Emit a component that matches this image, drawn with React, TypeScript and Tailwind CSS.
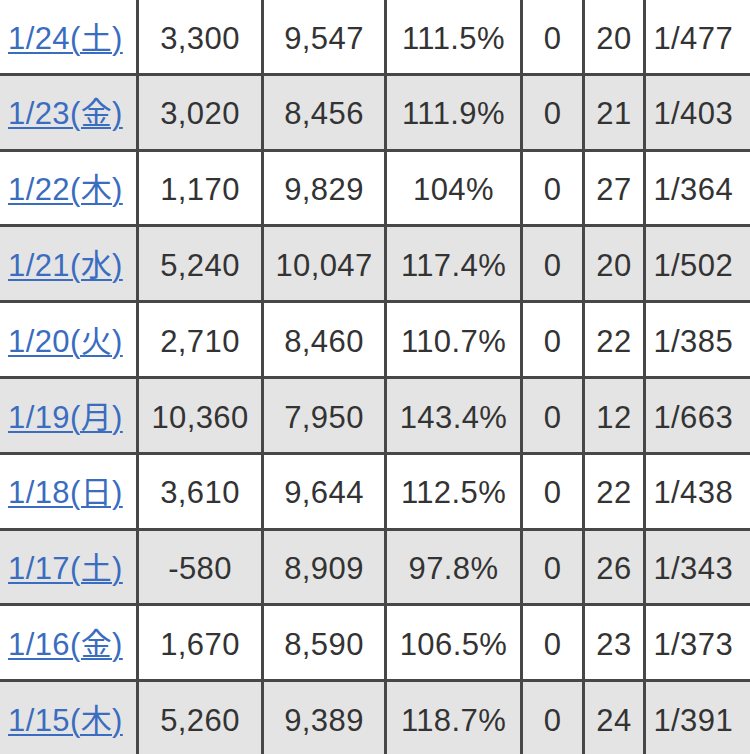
import React from 'react'

const rows = [
  ['1/24(土)', '3,300', '9,547', '111.5%', '0', '20', '1/477'],
  ['1/23(金)', '3,020', '8,456', '111.9%', '0', '21', '1/403'],
  ['1/22(木)', '1,170', '9,829', '104%', '0', '27', '1/364'],
  ['1/21(水)', '5,240', '10,047', '117.4%', '0', '20', '1/502'],
  ['1/20(火)', '2,710', '8,460', '110.7%', '0', '22', '1/385'],
  ['1/19(月)', '10,360', '7,950', '143.4%', '0', '12', '1/663'],
  ['1/18(日)', '3,610', '9,644', '112.5%', '0', '22', '1/438'],
  ['1/17(土)', '-580', '8,909', '97.8%', '0', '26', '1/343'],
  ['1/16(金)', '1,670', '8,590', '106.5%', '0', '23', '1/373'],
  ['1/15(木)', '5,260', '9,389', '118.7%', '0', '24', '1/391'],
]

const cell = 'border-[3px] border-[#474747] text-center p-0 pt-[5px]'

export default function App() {
  return (
    <div className="w-[750px] h-[754px] overflow-hidden bg-white">
      <table
        className="border-collapse table-fixed -mt-[3px] -ml-[3px] w-[756px] text-[#333] text-[31px] tracking-[0.4px]"
        style={{ fontFamily: '"Liberation Sans", "Noto Sans CJK JP", sans-serif' }}
      >
        <colgroup>
          <col className="w-[139px]" />
          <col className="w-[125px]" />
          <col className="w-[123px]" />
          <col className="w-[136px]" />
          <col className="w-[62px]" />
          <col className="w-[61px]" />
          <col className="w-[110px]" />
        </colgroup>
        <tbody>
          {rows.map((r, i) => (
            <tr key={r[0]} className={`h-[75.8px] ${i % 2 === 1 ? 'bg-[#e4e4e4]' : 'bg-white'}`}>
              <td className={`${cell} text-left pl-[8px]`}>
                <a href="#" className="text-[#3a6cc0] underline decoration-[1.5px] underline-offset-[3px]">
                  {r[0]}
                </a>
              </td>
              <td className={cell}>{r[1]}</td>
              <td className={cell}>{r[2]}</td>
              <td className={cell}>{r[3]}</td>
              <td className={cell}>{r[4]}</td>
              <td className={cell}>{r[5]}</td>
              <td className={`${cell} border-r-0 pr-[14px]`}>{r[6]}</td>
            </tr>
          ))}
        </tbody>
      </table>
    </div>
  )
}
